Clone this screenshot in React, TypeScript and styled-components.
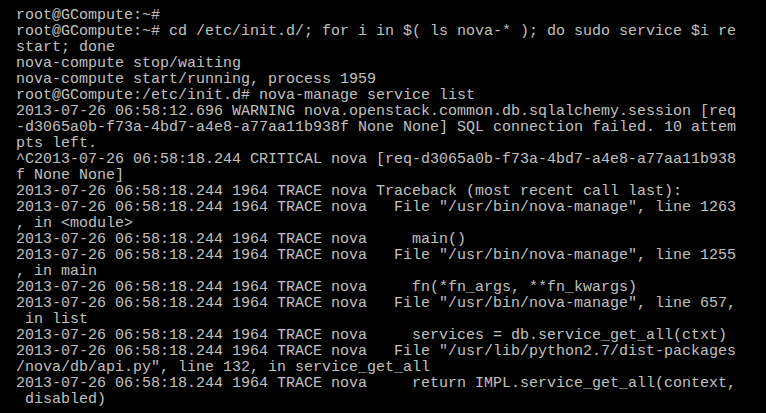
import React from "react";
import styled, { createGlobalStyle } from "styled-components";

const GlobalStyle = createGlobalStyle`
  html, body {
    margin: 0;
    padding: 0;
    background: #000000;
  }
`;

const Screen = styled.div`
  width: 766px;
  height: 413px;
  box-sizing: border-box;
  background: #000000;
  padding: 8px 0 0 16px;
  overflow: hidden;
  display: flex;
  flex-direction: column;
`;

const Line = styled.div`
  font-family: "Liberation Mono", "DejaVu Sans Mono", monospace;
  font-size: 15px;
  line-height: 16px;
  height: 16px;
  color: #c0c0c0;
  white-space: pre;
`;

const lines: string[] = [
  "root@GCompute:~#",
  "root@GCompute:~# cd /etc/init.d/; for i in $( ls nova-* ); do sudo service $i re",
  "start; done",
  "nova-compute stop/waiting",
  "nova-compute start/running, process 1959",
  "root@GCompute:/etc/init.d# nova-manage service list",
  "2013-07-26 06:58:12.696 WARNING nova.openstack.common.db.sqlalchemy.session [req",
  "-d3065a0b-f73a-4bd7-a4e8-a77aa11b938f None None] SQL connection failed. 10 attem",
  "pts left.",
  "^C2013-07-26 06:58:18.244 CRITICAL nova [req-d3065a0b-f73a-4bd7-a4e8-a77aa11b938",
  "f None None]",
  "2013-07-26 06:58:18.244 1964 TRACE nova Traceback (most recent call last):",
  '2013-07-26 06:58:18.244 1964 TRACE nova   File "/usr/bin/nova-manage", line 1263',
  ", in <module>",
  "2013-07-26 06:58:18.244 1964 TRACE nova     main()",
  '2013-07-26 06:58:18.244 1964 TRACE nova   File "/usr/bin/nova-manage", line 1255',
  ", in main",
  "2013-07-26 06:58:18.244 1964 TRACE nova     fn(*fn_args, **fn_kwargs)",
  '2013-07-26 06:58:18.244 1964 TRACE nova   File "/usr/bin/nova-manage", line 657,',
  " in list",
  "2013-07-26 06:58:18.244 1964 TRACE nova     services = db.service_get_all(ctxt)",
  '2013-07-26 06:58:18.244 1964 TRACE nova   File "/usr/lib/python2.7/dist-packages',
  '/nova/db/api.py", line 132, in service_get_all',
  "2013-07-26 06:58:18.244 1964 TRACE nova     return IMPL.service_get_all(context,",
  " disabled)",
];

export default function App() {
  return (
    <>
      <GlobalStyle />
      <Screen>
        {lines.map((l, i) => (
          <Line key={i}>{l}</Line>
        ))}
      </Screen>
    </>
  );
}
